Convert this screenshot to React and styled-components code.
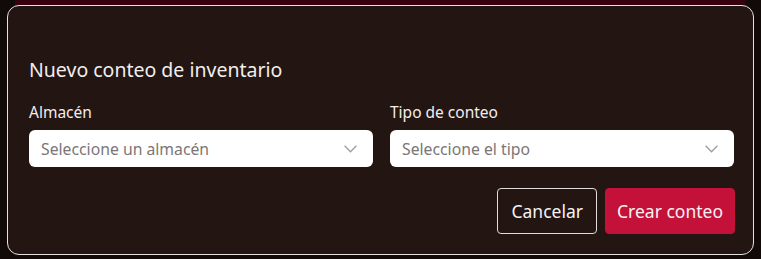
import React from "react";
import styled, { createGlobalStyle } from "styled-components";

const Global = createGlobalStyle`
  html, body { margin: 0; padding: 0; background: #120a09; }
  body { font-family: "Noto Sans", "Open Sans", sans-serif; width: 761px; height: 259px; overflow: hidden; }
`;

const Page = styled.div`
  display: flex;
  flex-direction: column;
  width: 761px;
  height: 259px;
`;

const HeaderStrip = styled.div`
  height: 5px;
  margin: 0 15px;
  background: #36000f;
`;

const Dialog = styled.div`
  margin: 0 7px;
  height: 250px;
  box-sizing: border-box;
  border: 1px solid #e6e2e1;
  border-radius: 12px;
  background: #221512;
  padding: 51px 19px 0 21px;
  display: flex;
  flex-direction: column;
`;

const Title = styled.h2`
  margin: 0;
  font-size: 19.5px;
  font-weight: 400;
  color: #f2eeee;
  line-height: 26px;
`;

const Fields = styled.div`
  display: grid;
  grid-template-columns: 1fr 1fr;
  column-gap: 17px;
  margin-top: 18px;
`;

const Field = styled.div`
  display: flex;
  flex-direction: column;
`;

const Label = styled.label`
  font-size: 15.5px;
  color: #f2eeee;
  line-height: 22px;
  margin-bottom: 7px;
`;

const Select = styled.div`
  height: 37px;
  box-sizing: border-box;
  background: #ffffff;
  border-radius: 6px;
  display: flex;
  align-items: center;
  justify-content: space-between;
  padding: 0 16px 0 12px;
  font-size: 15.75px;
  color: #7a7676;
`;

const Chevron = () => (
  <svg width="13" height="8" viewBox="0 0 13 8" fill="none">
    <path d="M0.6 0.8 L6.5 6.8 L12.4 0.8" stroke="#a09d9d" strokeWidth="1.3" />
  </svg>
);

const Actions = styled.div`
  display: flex;
  justify-content: flex-end;
  gap: 8px;
  margin-top: 21px;
  margin-right: -1px;
`;

const Button = styled.button`
  height: 46px;
  padding: 0 ${p => (p.$primary ? "11px" : "13px")};
  border-radius: 4px;
  font-family: inherit;
  font-size: 17.5px;
  color: #f7f2f2;
  background: ${p => (p.$primary ? "#c4113a" : "transparent")};
  border: 1px solid ${p => (p.$primary ? "#c4113a" : "#e2dcdc")};
`;

export default function App() {
  return (
    <>
      <Global />
      <Page>
        <HeaderStrip />
        <Dialog>
          <Title>Nuevo conteo de inventario</Title>
          <Fields>
            <Field>
              <Label>Almacén</Label>
              <Select>
                <span>Seleccione un almacén</span>
                <Chevron />
              </Select>
            </Field>
            <Field>
              <Label>Tipo de conteo</Label>
              <Select>
                <span>Seleccione el tipo</span>
                <Chevron />
              </Select>
            </Field>
          </Fields>
          <Actions>
            <Button>Cancelar</Button>
            <Button $primary>Crear conteo</Button>
          </Actions>
        </Dialog>
      </Page>
    </>
  );
}
